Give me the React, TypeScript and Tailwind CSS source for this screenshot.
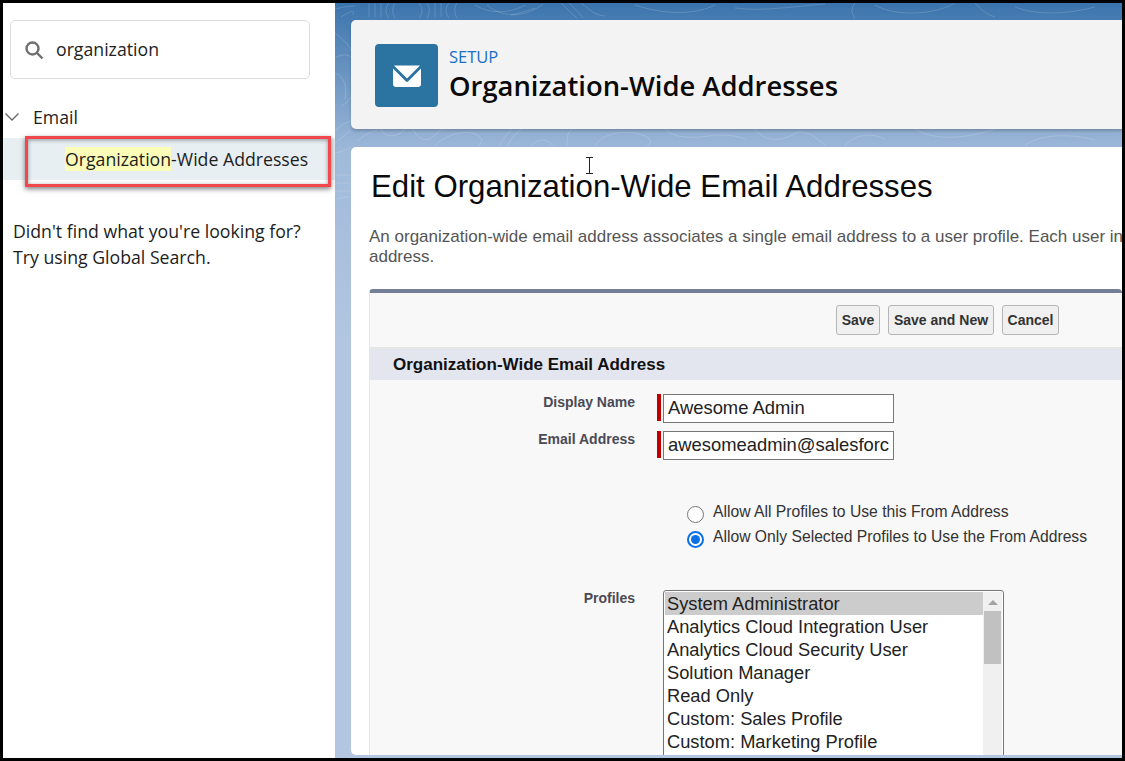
const profiles = [
  "System Administrator",
  "Analytics Cloud Integration User",
  "Analytics Cloud Security User",
  "Solution Manager",
  "Read Only",
  "Custom: Sales Profile",
  "Custom: Marketing Profile",
];

function TopoLines() {
  return (
    <svg className="absolute inset-0 h-full w-full" viewBox="0 0 787 755" fill="none" stroke="#ffffff" strokeOpacity="0.16" strokeWidth="1">
      {/* top strip */}
      <path d="M0 6c8-2 14-3 20-3M34 0v14M40 0v14M46 0v14M54 0c-4 5-4 10 0 15M60 0c-3 5-3 10 0 15M84 0c4 5 4 10 0 15M92 0c3 5 3 10 0 15M100 0v14M106 0v14M114 0c-4 5-4 10 0 15M122 0c-3 5-3 10 0 15" />
      <path d="M140 2c16 10 36 8 50 0M152 2c16 14 40 12 56-1M176 12c8-2 16-4 24-7M226 0c6 6 10 10 16 15M234 0c6 6 10 10 14 15M246 0c10 8 14 12 24 13" />
      <path d="M300 2c30 10 60 10 80 0M400 5c30 4 70-3 90-4M520 0c-4 5-4 10 0 15M540 2c20 12 60 10 80-2M640 0c4 4 8 10 20 14M680 4c20 8 50 8 80 0" />
      {/* left edge */}
      <path d="M6 14c10-6 14-8 12-2M0 30c10 8 16 14 16 18M0 55c14-8 20 0 22 14 2 14-6 30-16 34M0 70c10 4 12 14 10 26M0 128c8-8 14-10 16-10M0 140c8-6 12-10 16-12M0 150c8-2 12-3 16-6M0 172h16M0 180h14M0 188h16M2 196c8-2 10-2 12-2" />
      {/* strip between the two cards */}
      <path d="M22 138c8-6 14-10 20-10M46 126c2 8 16 10 24 0M78 126c4 10 14 16 24 4 4-4 6-4 10-4M100 143c10-12 30-16 40-12 8 4 8 6 4 12M164 143c6-10 10-14 14-18M172 143c6-10 10-14 16-18M196 143c6-8 16-8 22 0M232 143c0-8 0-14 6-18M260 143c6-12 30-18 50-10 8 4 6 8 2 10M330 126c10 12 40 8 50 6 8 0 20 0 30 4" />
      <path d="M420 126c10 14 30 12 40 4 10-4 20 4 30 12M510 143c8-12 30-14 40-6M580 126c20 12 50 10 80 0M690 143c10-10 40-14 70-6" />
    </svg>
  );
}

function MailIcon() {
  return (
    <svg width="28" height="22" viewBox="0 0 28 22" fill="#ffffff">
      <path d="M1 0.5h26L14 13.5Z" />
      <path d="M0 3.500 13 16.500c.6.6 1.400.6 2 0L28 3.500V19c0 1.700-1.300 3-3 3H3c-1.700 0-3-1.300-3-3Z" />
    </svg>
  );
}

export default function App() {
  return (
    <div className="relative flex h-[761px] w-[1125px] overflow-hidden border-[3px] border-black bg-white font-['Open_Sans',sans-serif]">
      {/* left search panel */}
      <aside className="flex w-[332px] shrink-0 flex-col bg-white text-[#1d1d1d]">
        <div className="mt-[17px] ml-[7px] flex h-[59px] w-[300px] items-center rounded-[5px] border border-[#dddbda] pl-[13px]">
          <svg width="20" height="20" viewBox="0 0 20 20" fill="none" stroke="#6f6f6f" strokeWidth="2.400">
            <circle cx="8.500" cy="8.500" r="6" />
            <path d="m13 13 5.500 5.500" />
          </svg>
          <span className="ml-[12px] text-[17.7px] text-[#222]">organization</span>
        </div>
        <div className="mt-[25px] flex h-[26px] items-center">
          <svg className="ml-[1px]" width="16" height="10" viewBox="0 0 16 10" fill="none" stroke="#666" strokeWidth="1.300">
            <path d="m1.500 1.500 6.500 6.500 6.500-6.500" />
          </svg>
          <span className="ml-[13px] text-[17.7px]">Email</span>
        </div>
        <div className="mt-[8px] flex h-[42px] items-center bg-[#e8eff3] pl-[62px] text-[17.7px]">
          <span className="bg-[#fbfcb8] leading-[24px]">Organization</span>
          <span>-Wide Addresses</span>
        </div>
        <p className="mt-[38px] ml-[10px] text-[17.7px] leading-[26px]">
          Didn't find what you're looking for?
          <br />
          Try using Global Search.
        </p>
      </aside>

      {/* main area */}
      <main className="relative flex min-w-0 flex-1 flex-col gap-[18px] bg-gradient-to-b from-[#3a74ac] via-[#a0bada] via-20% to-[#b2c6e1] to-45% pt-[17px] pb-[3px] pl-[16px]">
        <TopoLines />
        <header className="relative flex h-[109px] shrink-0 items-center rounded-l-[5px] bg-[#f3f3f3] pl-[24px] shadow-[0_2px_3px_rgba(0,0,0,0.2)]">
          <div className="mt-[2px] flex h-[63px] w-[63px] items-center justify-center rounded-[4px] bg-[#2b74a1]">
            <MailIcon />
          </div>
          <div className="mt-[2px] ml-[11px]">
            <div className="text-[16.500px] leading-[20px] text-[#1a6fc9]">SETUP</div>
            <h1 className="mt-[1px] text-[27.4px] leading-[36px] font-semibold text-[#0a0a0a]">Organization-Wide Addresses</h1>
          </div>
        </header>

        <section className="relative min-h-0 flex-1 overflow-hidden rounded-l-[5px] bg-white pl-[18px] font-['Liberation_Sans',sans-serif]">
          <h2 className="mt-[22px] ml-[2px] text-[31.2px] leading-[36px] text-[#0a0a0a]">Edit Organization-Wide Email Addresses</h2>
          <p className="mt-[22px] text-[17px] leading-[20px] whitespace-nowrap text-[#555]">
            An organization-wide email address associates a single email address to a user profile. Each user in
            <br />
            address.
          </p>
          <div className="mt-[22px] h-[470px] overflow-hidden rounded-t-[4px] border-t-[4px] border-l border-t-[#747e96] border-l-[#e5e5e5] bg-[#f8f8f8]">
            <div className="flex h-[56px] items-start gap-[8px] border-b-2 border-[#e5e5e5] pt-[12px] pl-[466px]">
              <button className="h-[30px] w-[44px] rounded-[3px] border border-[#b5b5b5] bg-[#f0f0f0] text-[14px] font-bold text-[#333]">Save</button>
              <button className="h-[30px] w-[106px] rounded-[3px] border border-[#b5b5b5] bg-[#f0f0f0] text-[14px] font-bold text-[#333]">Save and New</button>
              <button className="h-[30px] w-[57px] rounded-[3px] border border-[#b5b5b5] bg-[#f0f0f0] text-[14px] font-bold text-[#333]">Cancel</button>
            </div>
            <div className="flex h-[31px] items-center bg-[#e3e6ef] pl-[23px] text-[17px] font-bold text-[#111]">Organization-Wide Email Address</div>

            <div className="mt-[14px] flex h-[29px]">
              <label className="w-[265px] text-right text-[14px] leading-[17px] font-bold text-[#4a4a56]">Display Name</label>
              <span className="ml-[22px] h-[27px] w-[4px] bg-[#c00000]" />
              <div className="ml-[2px] h-[29px] w-[231px] border border-[#777] bg-white pl-[4px] text-[18.4px] leading-[25px] text-[#222]">Awesome Admin</div>
            </div>
            <div className="mt-[8px] flex h-[29px]">
              <label className="w-[265px] text-right text-[14px] leading-[17px] font-bold text-[#4a4a56]">Email Address</label>
              <span className="ml-[22px] h-[27px] w-[4px] bg-[#c00000]" />
              <div className="ml-[2px] h-[29px] w-[231px] border border-[#777] bg-white pl-[4px] text-[18.4px] leading-[25px] whitespace-nowrap text-[#222]">awesomeadmin@salesforc</div>
            </div>

            <div className="mt-[40px] ml-[317px] flex h-[25px] items-start">
              <span className="mt-[6px] h-[17px] w-[17px] rounded-full border border-[#767676] bg-white" />
              <span className="mt-[2px] ml-[9px] text-[15.700px] leading-[20px] text-[#333]">Allow All Profiles to Use this From Address</span>
            </div>
            <div className="flex h-[25px] items-start">
              <span className="mt-[6px] ml-[317px] flex h-[17px] w-[17px] items-center justify-center rounded-full border-2 border-[#0b6fe8] bg-white">
                <span className="h-[9px] w-[9px] rounded-full bg-[#0b6fe8]" />
              </span>
              <span className="mt-[2px] ml-[9px] text-[15.700px] leading-[20px] text-[#333]">Allow Only Selected Profiles to Use the From Address</span>
            </div>

            <div className="mt-[40px] flex">
              <label className="w-[265px] text-right text-[14px] leading-[17px] font-bold text-[#4a4a56]">Profiles</label>
              <div className="ml-[28px] flex h-[200px] w-[341px] rounded-[3px] border border-[#767676] bg-white p-px">
                <ul className="w-[318px] text-[18.3px] leading-[23px] text-[#222]">
                  {profiles.map((p, i) => (
                    <li key={p} className={i === 0 ? "bg-[#cccccc] pl-[2px]" : "pl-[2px]"}>
                      {p}
                    </li>
                  ))}
                </ul>
                <div className="flex w-[19px] flex-col items-center bg-[#f0f0f0] pt-[8px]">
                  <span className="h-0 w-0 border-x-[5px] border-b-[5px] border-x-transparent border-b-[#a3a3a3]" />
                  <span className="mt-[6px] h-[53px] w-[17px] bg-[#c1c1c1]" />
                </div>
              </div>
            </div>
          </div>
        </section>
      </main>

      {/* annotation box */}
      <div className="absolute top-[133px] left-[22px] h-[51px] w-[306px] border-[3px] border-[#f0484c] shadow-[0_2px_5px_rgba(0,0,0,0.5),inset_0_1px_4px_rgba(0,0,0,0.4)]" />

      {/* text cursor */}
      <svg className="absolute top-[154px] left-[582px]" width="9" height="17" viewBox="0 0 9 17" fill="none" stroke="#222" strokeWidth="1">
        <path d="M1 .5h7M4.500 .5v16M1 16.500h7" />
      </svg>
    </div>
  );
}
